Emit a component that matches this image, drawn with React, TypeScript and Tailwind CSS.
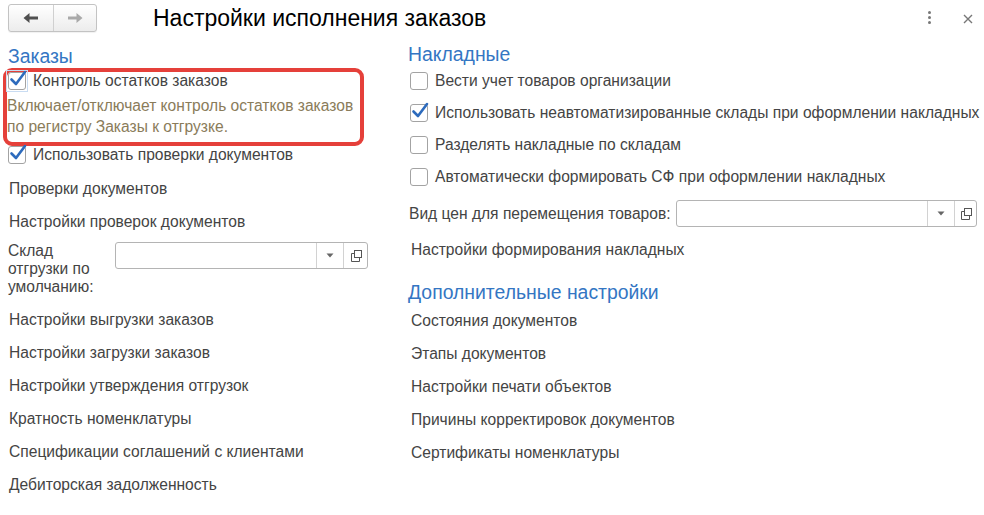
import React from 'react'

const textCls = "text-[15.6px] text-[#444] whitespace-nowrap"

function Check({ checked = false, focused = false }: { checked?: boolean; focused?: boolean }) {
  return (
    <span className={`inline-flex shrink-0 items-center justify-center ${focused ? 'outline outline-1 outline-[#c9dcf2] outline-offset-[1px]' : ''}`}>
      <span className="relative w-[18px] h-[18px] border border-[#a3a3a3] rounded-[3px] bg-white">
        {checked && (
          <svg width="18" height="18" viewBox="0 0 18 18" className="absolute left-[0px] top-[-3px]">
            <path d="M2.5 9.5 L7 14 L16 2" fill="none" stroke="#2d6bbd" strokeWidth="2.6" strokeLinecap="round" strokeLinejoin="round" />
          </svg>
        )}
      </span>
    </span>
  )
}

function OpenIcon() {
  return (
    <svg width="14" height="14" viewBox="0 0 14 14" fill="none" stroke="#555" strokeWidth="1">
      <rect x="5.5" y="1.5" width="7" height="7" />
      <path d="M5.5 4.5h-3v8h8v-4" />
    </svg>
  )
}

function Field({ width, inputW }: { width: string; inputW: string }) {
  return (
    <div className={`${width} h-[27px] border border-[#b4b4b4] rounded-[3px] bg-white flex`}>
      <div className={`${inputW} h-full`}></div>
      <div className="w-[27px] h-full border-l border-[#d2d2d2] flex items-center justify-center">
        <svg width="8" height="5" viewBox="0 0 8 5"><path d="M0.5 0.5h7L4 4.5z" fill="#666" /></svg>
      </div>
      <div className="flex-1 h-full border-l border-[#d2d2d2] flex items-center justify-center">
        <OpenIcon />
      </div>
    </div>
  )
}

function LinkRow({ label, pl = 'pl-[6px]' }: { label: string; pl?: string }) {
  return (
    <div className={`h-[33px] flex items-center ${pl} ${textCls}`}>{label}</div>
  )
}

function CheckRow({ label, checked }: { label: string; checked?: boolean }) {
  return (
    <div className="h-[32px] flex items-center gap-[7px] pl-[2px]">
      <Check checked={checked} />
      <span className={textCls}>{label}</span>
    </div>
  )
}

export default function App() {
  return (
    <div className="w-[984px] h-[515px] bg-white overflow-hidden font-['Liberation_Sans',Arial,sans-serif]">
      {/* Header */}
      <div className="h-[36px] flex items-center pl-[8px] pr-[10px]">
        <div className="w-[89px] h-[28px] border border-[#c3c3c3] rounded-[3px] bg-gradient-to-b from-white to-[#ececec] flex shadow-[0_1px_1px_rgba(0,0,0,0.06)]">
          <div className="w-[45px] h-full flex items-center justify-center border-r border-[#d0d0d0]">
            <svg width="16" height="12" viewBox="0 0 16 12">
              <path d="M0.5 6 L6.5 1 V4.6 H15 V7.4 H6.5 V11 Z" fill="#505050" />
            </svg>
          </div>
          <div className="flex-1 h-full flex items-center justify-center">
            <svg width="16" height="12" viewBox="0 0 16 12">
              <path d="M15.5 6 L9.5 1 V4.6 H1 V7.4 H9.5 V11 Z" fill="#a9a9a9" />
            </svg>
          </div>
        </div>
        <div className="ml-[56px] text-[23px] text-black whitespace-nowrap mt-[1px]">Настройки исполнения заказов</div>
        <div className="flex-1"></div>
        <div className="flex flex-col gap-[2px] mr-[32px] mt-[-2px]">
          <span className="w-[3px] h-[3px] rounded-full bg-[#777]"></span>
          <span className="w-[3px] h-[3px] rounded-full bg-[#777]"></span>
          <span className="w-[3px] h-[3px] rounded-full bg-[#777]"></span>
        </div>
        <svg width="10" height="10" viewBox="0 0 10 10" className="mr-[1px] mt-[1px]">
          <path d="M1 1L9 9M9 1L1 9" stroke="#777" strokeWidth="1.4" />
        </svg>
      </div>

      <div className="flex">
        {/* Left column */}
        <div className="w-[400px] pl-[3px]">
          <div className="mt-[10px] h-[22px] flex items-center pl-[5px] text-[19.4px] text-[#3476c3]">Заказы</div>
          <div className="w-[361px] border-[4px] border-[#e5403a] rounded-[9px] pt-0 pb-[5px]">
            <div className="h-[18px] flex items-center gap-[7px] pl-[1px]">
              <Check checked focused />
              <span className={textCls}>Контроль остатков заказов</span>
            </div>
            <div className="mt-[5px] text-[15.6px] leading-[21px] text-[#8a7c5a] whitespace-nowrap">
              Включает/отключает контроль остатков заказов<br />по регистру Заказы к отгрузке.
            </div>
          </div>
          <div className="h-[18px] flex items-center gap-[7px] pl-[5px]">
            <Check checked />
            <span className={textCls}>Использовать проверки документов</span>
          </div>
          <div className="mt-[8px]">
            <LinkRow label="Проверки документов" />
            <LinkRow label="Настройки проверок документов" />
          </div>
          <div className="mt-[4px] flex pl-[5px]">
            <div className="w-[107px] text-[15.6px] leading-[18px] text-[#444]">
              Склад<br />отгрузки по<br />умолчанию:
            </div>
            <Field width="w-[253px]" inputW="w-[200px]" />
          </div>
          <div className="mt-[7px]">
            <LinkRow label="Настройки выгрузки заказов" />
            <LinkRow label="Настройки загрузки заказов" />
            <LinkRow label="Настройки утверждения отгрузок" />
            <LinkRow label="Кратность номенклатуры" />
            <LinkRow label="Спецификации соглашений с клиентами" />
            <LinkRow label="Дебиторская задолженность" />
          </div>
        </div>

        {/* Right column */}
        <div className="flex-1 pl-[8px]">
          <div className="mt-[9px] h-[20px] flex items-center text-[19.4px] text-[#3476c3]">Накладные</div>
          <CheckRow label="Вести учет товаров организации" />
          <CheckRow label="Использовать неавтоматизированные склады при оформлении накладных" checked />
          <CheckRow label="Разделять накладные по складам" />
          <CheckRow label="Автоматически формировать СФ при оформлении накладных" />
          <div className="mt-[7px] flex items-center pl-[1px]">
            <span className={`${textCls} w-[267px]`}>Вид цен для перемещения товаров:</span>
            <Field width="w-[301px]" inputW="w-[250px]" />
          </div>
          <div className="mt-[6px]">
            <LinkRow label="Настройки формирования накладных" pl="pl-[3px]" />
          </div>
          <div className="mt-[16px] h-[22px] flex items-center text-[19.4px] text-[#3476c3]">Дополнительные настройки</div>
          <LinkRow label="Состояния документов" pl="pl-[3px]" />
          <LinkRow label="Этапы документов" pl="pl-[3px]" />
          <LinkRow label="Настройки печати объектов" pl="pl-[3px]" />
          <LinkRow label="Причины корректировок документов" pl="pl-[3px]" />
          <LinkRow label="Сертификаты номенклатуры" pl="pl-[3px]" />
        </div>
      </div>
    </div>
  )
}
